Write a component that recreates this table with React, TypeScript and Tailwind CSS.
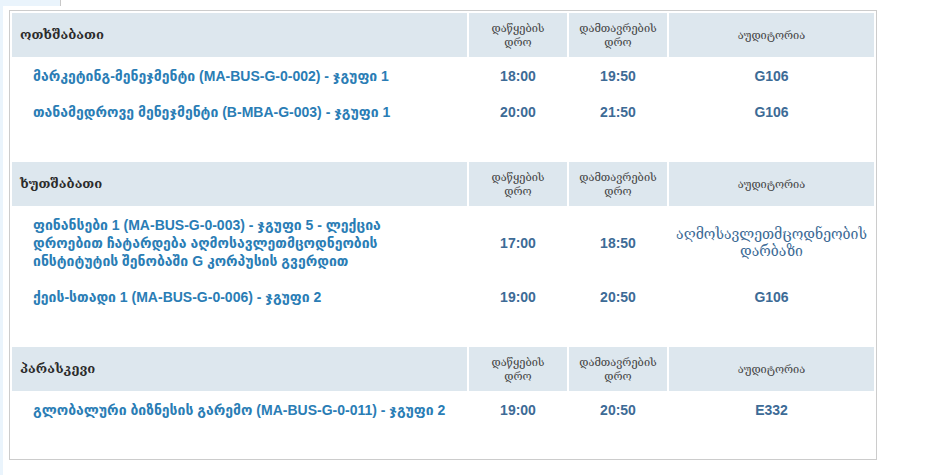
import React from "react";

interface Lesson {
    title: React.ReactNode;
    start: string;
    end: string;
    room: React.ReactNode;
}

interface Day {
    name: string;
    lessons: Lesson[];
}

const days: Day[] = [
    {
        name: "ოთხშაბათი",
        lessons: [
            { title: "მარკეტინგ-მენეჯმენტი (MA-BUS-G-0-002) - ჯგუფი 1", start: "18:00", end: "19:50", room: "G106" },
            { title: "თანამედროვე მენეჯმენტი (B-MBA-G-003) - ჯგუფი 1", start: "20:00", end: "21:50", room: "G106" },
        ],
    },
    {
        name: "ხუთშაბათი",
        lessons: [
            {
                title: (
                    <>
                        ფინანსები 1 (MA-BUS-G-0-003) - ჯგუფი 5 - ლექცია<br />
                        დროებით ჩატარდება აღმოსავლეთმცოდნეობის<br />
                        ინსტიტუტის შენობაში G კორპუსის გვერდით
                    </>
                ),
                start: "17:00",
                end: "18:50",
                room: (
                    <span className="font-normal font-['Liberation_Sans','DejaVu_Serif',serif]">
                        აღმოსავლეთმცოდნეობის დარბაზი
                    </span>
                ),
            },
            { title: "ქეის-სთადი 1 (MA-BUS-G-0-006) - ჯგუფი 2", start: "19:00", end: "20:50", room: "G106" },
        ],
    },
    {
        name: "პარასკევი",
        lessons: [
            { title: "გლობალური ბიზნესის გარემო (MA-BUS-G-0-011) - ჯგუფი 2", start: "19:00", end: "20:50", room: "E332" },
        ],
    },
];

function DayTable({ day, last }: { day: Day; last: boolean }) {
    return (
        <table className={`table-fixed w-full border-separate border-spacing-[2px] ${last ? "" : "mb-[29px]"}`}>
            <colgroup>
                <col className="w-[455px]" />
                <col className="w-[98px]" />
                <col className="w-[98px]" />
                <col />
            </colgroup>
            <thead className="font-['Liberation_Sans','DejaVu_Serif',serif]">
                <tr className="h-[44px] bg-[#dde7ee]">
                    <th className="text-left pl-[8px] text-[13px] font-bold text-[#2b2b2b]">{day.name}</th>
                    <th className="px-[10px] text-[11px] leading-[14px] font-normal text-[#444]">დაწყების დრო</th>
                    <th className="px-[6px] text-[11px] leading-[14px] font-normal text-[#444]">დამთავრების დრო</th>
                    <th className="px-[6px] text-[11px] leading-[14px] font-normal text-[#444]">აუდიტორია</th>
                </tr>
            </thead>
            <tbody>
                {day.lessons.map((lesson, index) => (
                    <tr key={index}>
                        <td className="py-[8px] pl-[21px] pr-[8px] text-[14px] leading-[18px] font-bold text-[#2a7db5]">
                            {lesson.title}
                        </td>
                        <td className="text-center text-[14px] font-bold text-[#3d6b96]">{lesson.start}</td>
                        <td className="text-center text-[14px] font-bold text-[#3d6b96]">{lesson.end}</td>
                        <td className="text-center px-[4px] text-[14px] leading-[17px] font-bold text-[#3d6b96]">
                            {lesson.room}
                        </td>
                    </tr>
                ))}
            </tbody>
        </table>
    );
}

export default function App() {
    return (
        <div className="flex h-[475px] bg-white font-['Liberation_Sans','DejaVu_Sans',sans-serif]">
            <div className="w-[3px] bg-[#eaf4fc]" />
            <div className="flex-1">
                <div className="h-[6px] w-[58px] bg-[#eaf4fc] border-r border-[#c8c8c8]" />
                <div className="ml-[6px] mt-[4px] w-[868px] border border-[#cccccc] pb-[30px]">
                    {days.map((day, index) => (
                        <DayTable key={day.name} day={day} last={index === days.length - 1} />
                    ))}
                </div>
            </div>
        </div>
    );
}
